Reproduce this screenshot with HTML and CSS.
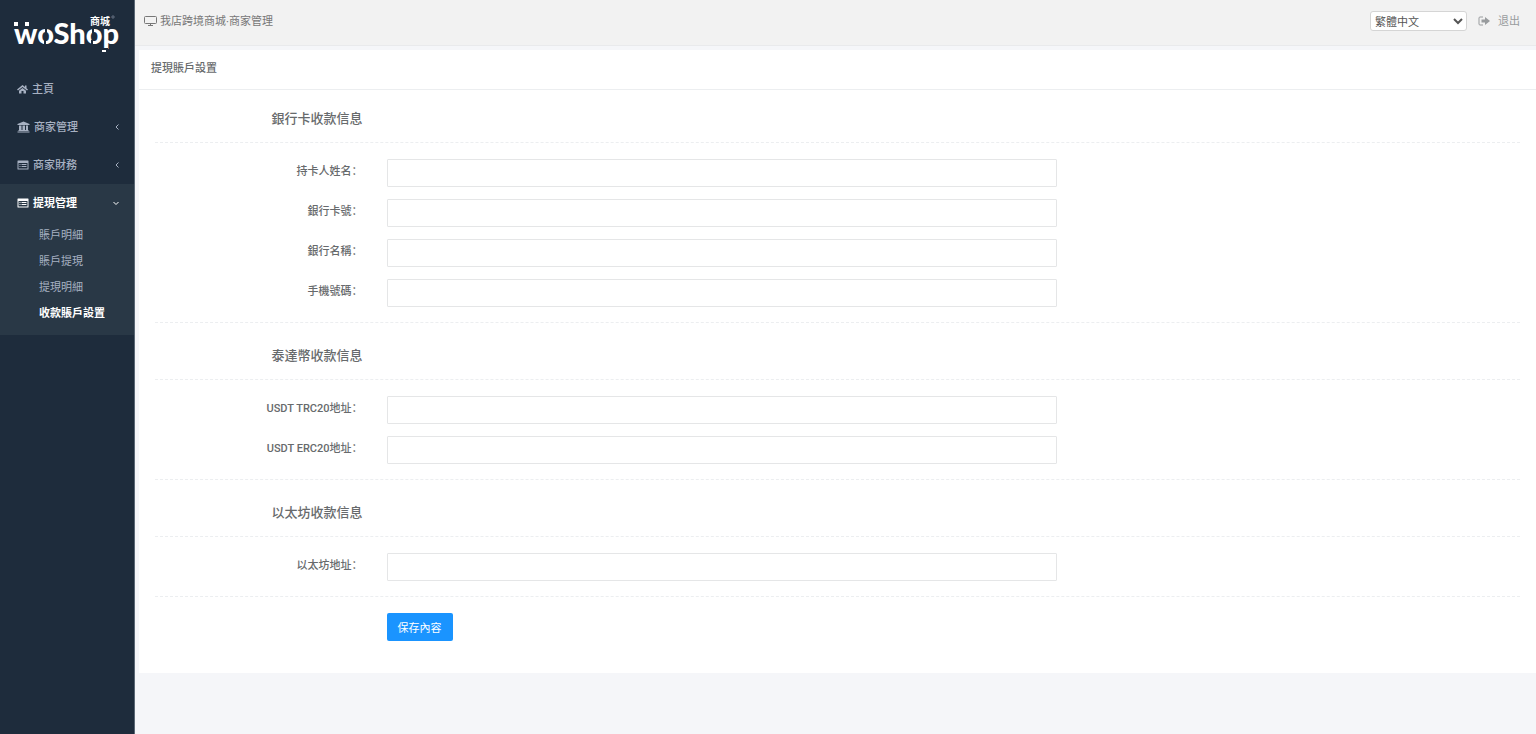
FILE: index.html
```html
<!DOCTYPE html>
<html lang="zh-CN">
<head>
  <meta charset="UTF-8">
  <meta name="viewport" content="width=device-width, initial-scale=1.0">
  <title>我店跨境商城·商家管理</title>
  <link rel="stylesheet" href="styles.css">
</head>
<body>
  <nav class="sidebar">
    <a class="logo" href="#" aria-label="woShop 商城">
      <svg width="110" height="42" viewBox="0 0 110 42">
        <text class="logo-name" x="2" y="30">woShop</text>
        <text class="logo-cn" x="78" y="11">商城</text>
        <circle class="logo-reg" cx="101" cy="3" r="1.2"/>
        <path class="logo-gap" d="M34 14v5M33 26v5M81 14v5M80 26v5M88 35h8"/>
        <path class="logo-bar" d="M2 8h4v4H2zM13 8h4v4h-4zM90 36h4v2h-4z"/>
      </svg>
    </a>
    <ul class="menu">
      <li>
        <a href="#">
          <svg class="icon" width="11" height="10" viewBox="0 0 22 20"><path d="M11 2 0 11l2 2 9-7 9 7 2-2-3-2.600V3h-3v3zM11 8l-7 5.500V19h5v-5h4v5h5v-5.500z"/></svg>
          <span>主頁</span>
        </a>
      </li>
      <li>
        <a href="#">
          <svg class="icon" width="13" height="12" viewBox="0 0 26 24"><path d="M13 1 1 6v2h24V6zM4 9v9H3v2h20v-2h-1V9h-4v9h-2V9h-5v9H9V9zM1 21v2h24v-2z"/></svg>
          <span>商家管理</span>
          <svg class="arrow" width="6" height="8" viewBox="0 0 6 8"><path d="M4.500 1.500 2 4l2.500 2.500"/></svg>
        </a>
      </li>
      <li>
        <a href="#">
          <svg class="icon" width="12" height="10" viewBox="0 0 24 20"><path fill-rule="evenodd" d="M2 1h20a1 1 0 0 1 1 1v16a1 1 0 0 1-1 1H2a1 1 0 0 1-1-1V2a1 1 0 0 1 1-1zm1 5v11h18V6zm2 2h2v2H5zm4 0h10v2H9zm-4 4h2v2H5zm4 0h10v2H9z"/></svg>
          <span>商家財務</span>
          <svg class="arrow" width="6" height="8" viewBox="0 0 6 8"><path d="M4.500 1.500 2 4l2.500 2.500"/></svg>
        </a>
      </li>
      <li class="active">
        <a href="#">
          <svg class="icon" width="12" height="10" viewBox="0 0 24 20"><path fill-rule="evenodd" d="M2 1h20a1 1 0 0 1 1 1v16a1 1 0 0 1-1 1H2a1 1 0 0 1-1-1V2a1 1 0 0 1 1-1zm1 5v11h18V6zm2 2h2v2H5zm4 0h10v2H9zm-4 4h2v2H5zm4 0h10v2H9z"/></svg>
          <span>提現管理</span>
          <svg class="arrow" width="8" height="8" viewBox="0 0 8 8"><path d="M1.500 3 4 5.500 6.500 3"/></svg>
        </a>
        <ul class="submenu">
          <li><a href="#">賬戶明細</a></li>
          <li><a href="#">賬戶提現</a></li>
          <li><a href="#">提現明細</a></li>
          <li><a class="current" href="#">收款賬戶設置</a></li>
        </ul>
      </li>
    </ul>
  </nav>

  <div class="page">
    <header class="topbar">
      <div class="site-name">
        <svg width="13" height="12" viewBox="0 0 13 12"><path d="M1.500 1.500h10a1 1 0 0 1 1 1v5a1 1 0 0 1-1 1h-10a1 1 0 0 1-1-1v-5a1 1 0 0 1 1-1zM6.500 8.500v2M4 10.500h5"/></svg>
        <span>我店跨境商城·商家管理</span>
      </div>
      <div class="tools">
        <select class="lang" aria-label="語言">
          <option>繁體中文</option>
        </select>
        <a class="logout" href="#">
          <svg width="12" height="10" viewBox="0 0 12 10"><path class="door" d="M5 1H2a1 1 0 0 0-1 1v6a1 1 0 0 0 1 1h3"/><path d="M7 1l5 4-5 4V6.500H3.500v-3H7z"/></svg>
          <span>退出</span>
        </a>
      </div>
    </header>

    <main class="box">
      <h1 class="box-title">提現賬戶設置</h1>
      <form class="box-content">
        <h2 class="section-title">銀行卡收款信息</h2>
        <hr>
        <div class="form-group">
          <label for="cardHolder">持卡人姓名：</label>
          <input type="text" id="cardHolder">
        </div>
        <div class="form-group">
          <label for="cardNumber">銀行卡號：</label>
          <input type="text" id="cardNumber">
        </div>
        <div class="form-group">
          <label for="bankName">銀行名稱：</label>
          <input type="text" id="bankName">
        </div>
        <div class="form-group">
          <label for="mobile">手機號碼：</label>
          <input type="text" id="mobile">
        </div>
        <hr>
        <h2 class="section-title">泰達幣收款信息</h2>
        <hr>
        <div class="form-group">
          <label for="trc20">USDT TRC20地址：</label>
          <input type="text" id="trc20">
        </div>
        <div class="form-group">
          <label for="erc20">USDT ERC20地址：</label>
          <input type="text" id="erc20">
        </div>
        <hr>
        <h2 class="section-title">以太坊收款信息</h2>
        <hr>
        <div class="form-group">
          <label for="ethAddress">以太坊地址：</label>
          <input type="text" id="ethAddress">
        </div>
        <hr>
        <div class="form-group">
          <button class="save" type="button">保存內容</button>
        </div>
      </form>
    </main>
  </div>
</body>
</html>
```
FILE: styles.css
```css
* {
  box-sizing: border-box;
}

body {
  margin: 0;
  display: flex;
  min-height: 100vh;
  background-color: #f5f6f9;
  color: #676a6c;
  font-family: "Open Sans", "Noto Sans CJK SC", sans-serif;
  font-size: 11px;
  line-height: 16px;
}

a {
  color: inherit;
  text-decoration: none;
}

ul {
  list-style: none;
  margin: 0;
  padding: 0;
}

/* sidebar */
.sidebar {
  width: 135px;
  flex-shrink: 0;
  background-color: #1e2c3c;
  border-right: 1px solid #5b6875;
  color: #a7b1c2;
}

.logo {
  display: block;
  height: 70px;
  padding: 14px 0 0 12px;
}

.logo svg {
  display: block;
}

.logo text,
.logo-bar {
  fill: #fff;
}

.logo-name {
  font-family: Lato, sans-serif;
  font-size: 29px;
  font-weight: 900;
}

.logo-cn {
  font-family: "Noto Sans CJK SC", sans-serif;
  font-size: 10px;
  font-weight: 700;
}

.logo-reg {
  fill: none;
  stroke: #a7b1c2;
  stroke-width: 0.5;
}

.logo-gap {
  stroke: #1e2c3c;
  stroke-width: 2;
}

.menu > li > a {
  display: flex;
  align-items: center;
  gap: 4px;
  height: 38px;
  padding: 0 14px 0 17px;
  font-weight: 500;
}

.icon {
  fill: currentColor;
}

.arrow {
  margin-left: auto;
  fill: none;
  stroke: currentColor;
}

.active {
  background-color: #293846;
  padding-bottom: 9px;
}

.active > a,
.submenu .current {
  color: #fff;
}

.menu > .active > a,
.submenu .current {
  font-weight: 700;
}

.submenu a {
  display: block;
  padding: 5px 0 5px 39px;
}

/* top bar */
.page {
  flex: 1;
  min-width: 0;
}

.topbar {
  display: flex;
  justify-content: space-between;
  height: 46px;
  padding: 11px 16px 0 9px;
  background-color: #f2f2f2;
  border-bottom: 1px solid #e9eaec;
}

.site-name,
.tools,
.logout {
  display: flex;
  align-items: center;
  height: 20px;
}

.site-name {
  gap: 3px;
  color: #777;
}

.site-name svg {
  fill: none;
  stroke: currentColor;
}

.lang {
  width: 97px;
  height: 20px;
  margin-right: 11px;
  padding: 0;
  background-color: #fff;
  border: 1px solid #d5d5d5;
  border-radius: 3px;
  color: #555;
  font-family: inherit;
  font-size: 11px;
}

.logout {
  gap: 8px;
  color: #999c9e;
}

.logout svg {
  fill: currentColor;
}

.logout .door {
  fill: none;
  stroke: currentColor;
}

/* content box */
.box {
  margin: 4px 0 0 4px;
  background-color: #fff;
}

.box-title {
  margin: 0;
  padding: 10px 12px 13px;
  border-bottom: 1px solid #eceef0;
  font-size: 11px;
  font-weight: 500;
}

.box-content {
  padding: 0 16px 20px;
}

hr {
  margin: 15px 0 16px;
  border: 0;
  border-top: 1px dashed #eceef0;
}

.section-title {
  width: calc((100% + 24px) / 6 - 24px);
  margin: 0;
  padding: 8px 0 1px;
  font-size: 13px;
  font-weight: 500;
  text-align: right;
}

.section-title:first-child {
  padding-top: 20px;
}

.form-group {
  display: grid;
  grid-template-columns: repeat(12, 1fr);
  margin: 0 -12px 12px;
}

.form-group:has(+ hr) {
  margin-bottom: 0;
}

.form-group label {
  grid-column: span 2;
  padding: 5px 12px 0;
  font-family: Roboto, "Noto Sans CJK SC", sans-serif;
  font-weight: 500;
  text-align: right;
}

.form-group input {
  grid-column: span 6;
  height: 28px;
  margin: 0 12px;
  padding: 4px 10px;
  border: 1px solid #e5e6e7;
  border-radius: 1px;
  font: inherit;
}

.save {
  grid-column: 3 / span 2;
  justify-self: start;
  height: 28px;
  margin-left: 12px;
  padding: 0 11px;
  background-color: #1a94ff;
  border: 0;
  border-radius: 2px;
  color: #fff;
  font-family: inherit;
  font-size: 11px;
  cursor: pointer;
}
```
